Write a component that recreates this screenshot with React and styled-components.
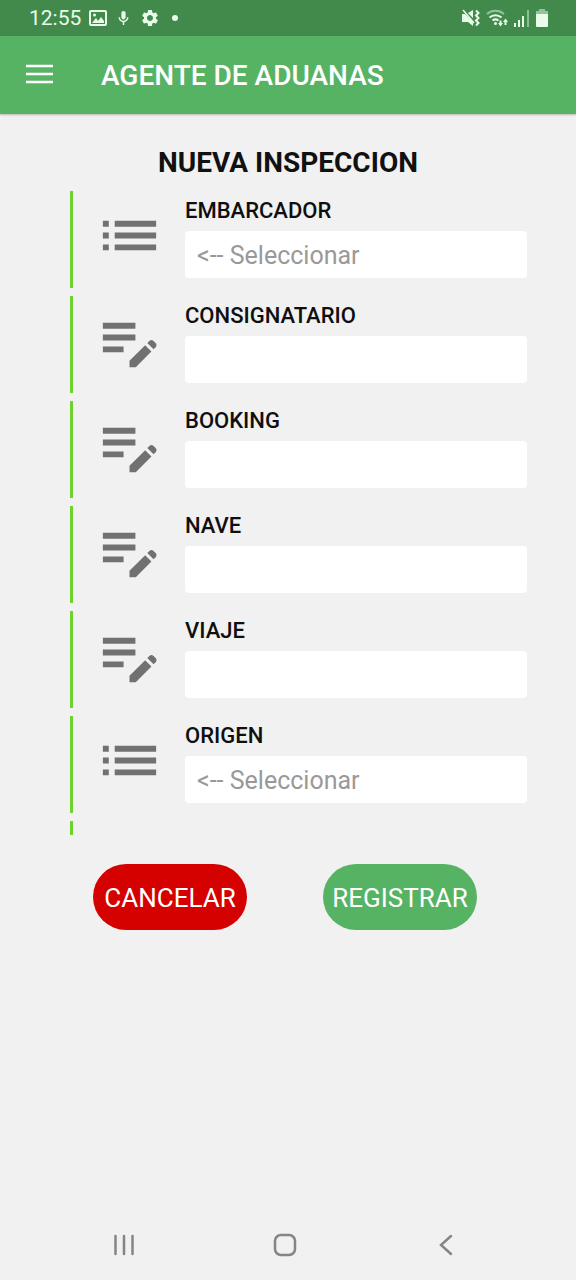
import React, { useState } from "react";
import styled, { createGlobalStyle } from "styled-components";

const GlobalStyle = createGlobalStyle`
  *, *::before, *::after { box-sizing: border-box; }
  body {
    margin: 0;
    background: #f1f1f1;
    color: #0f0f0f;
    font-family: Roboto, "Liberation Sans", sans-serif;
  }
`;

const Screen = styled.div`
  min-height: 100vh;
  display: flex;
  flex-direction: column;
`;

const StatusBar = styled.div`
  height: 36px;
  padding: 0 28px 0 29px;
  display: flex;
  align-items: center;
  justify-content: space-between;
  background: #428a4c;
  color: #e9fbe9;
`;

const StatusGroup = styled.div`
  display: flex;
  align-items: center;
  gap: ${(p) => p.$gap}px;
`;

const Clock = styled.span`
  font-size: 21px;
  line-height: 24px;
`;

const AppBar = styled.header`
  height: 78px;
  padding: 2px 24px 0;
  display: flex;
  align-items: center;
  gap: 47px;
  background: #57b364;
  color: #fff;
  box-shadow: 0 1px 2px rgba(0, 0, 0, 0.25);
`;

const MenuButton = styled.button`
  width: 30px;
  height: 30px;
  padding: 0;
  border: 0;
  background: none;
  color: inherit;
  cursor: pointer;

  svg { display: block; }
`;

const AppTitle = styled.h1`
  margin: 0;
  font-size: 28px;
  line-height: 32px;
  font-weight: 500;
`;

const Form = styled.form`
  padding: 32px 49px 0 70px;
`;

const FormTitle = styled.h2`
  margin: 0 0 11px;
  padding-right: 21px;
  font-size: 28px;
  line-height: 34px;
  font-weight: 700;
  text-align: center;
  color: #111;
`;

const Fields = styled.div`
  display: flex;
  flex-direction: column;
  gap: 8px;
`;

const FieldRow = styled.div`
  height: 97px;
  padding-left: 21px;
  display: flex;
  align-items: flex-start;
  gap: 20px;
  border-left: 3px solid #6cd32f;
`;

const FieldsEnd = styled.div`
  height: 14px;
  border-left: 3px solid #6cd32f;
`;

const FieldIcon = styled.svg`
  flex: none;
  width: 71px;
  height: 71px;
  margin-top: 9px;
  fill: #717171;
`;

const FieldBody = styled.div`
  flex: 1;
  min-width: 0;
  padding-top: 6px;
  display: flex;
  flex-direction: column;
  gap: 6px;
`;

const Label = styled.label`
  font-size: 22px;
  line-height: 28px;
  font-weight: 500;
`;

const Control = styled.input`
  appearance: none;
  width: 100%;
  height: 47px;
  margin: 0;
  padding: 3px 12px 0;
  border: 0;
  border-radius: 4px;
  background: #fff;
  color: #999;
  font-family: inherit;
  font-size: 25px;
  line-height: 30px;
`;

const Actions = styled.div`
  padding: 29px 0 0 23px;
  display: flex;
  gap: 76px;
`;

const PillButton = styled.button`
  width: 154px;
  height: 66px;
  padding: 2px 0 0;
  border: 0;
  border-radius: 33px;
  background: ${(p) => p.$color};
  color: #fff;
  font-family: inherit;
  font-size: 26px;
  line-height: 30px;
  cursor: pointer;
`;

const NavBar = styled.nav`
  height: 70px;
  margin-top: auto;
  padding: 0 49px 0 43px;
  display: grid;
  grid-template-columns: repeat(3, 1fr);
`;

const NavButton = styled.button`
  padding: 0;
  border: 0;
  background: none;
  color: #858585;
  display: flex;
  align-items: center;
  justify-content: center;
  cursor: pointer;
`;

const LIST_PATH =
  "M3 13h2v-2H3v2zm0 4h2v-2H3v2zm0-8h2V7H3v2zm4 4h14v-2H7v2zm0 4h14v-2H7v2zM7 7v2h14V7H7z";
const EDIT_PATH =
  "M3 10h11v2H3v-2zm0-2h11V6H3v2zm0 8h7v-2H3v2zm15.01-3.13.71-.71a.996.996 0 0 1 1.41 0l.71.71c.39.39.39 1.02 0 1.41l-.71.71-2.12-2.12zm-.71.71-5.3 5.3V21h2.12l5.3-5.3-2.12-2.12z";

const FIELDS = [
  { name: "embarcador", label: "EMBARCADOR", type: "select" },
  { name: "consignatario", label: "CONSIGNATARIO", type: "text" },
  { name: "booking", label: "BOOKING", type: "text" },
  { name: "nave", label: "NAVE", type: "text" },
  { name: "viaje", label: "VIAJE", type: "text" },
  { name: "origen", label: "ORIGEN", type: "select" },
];

function Field({ name, label, type, value, onChange }) {
  const isSelect = type === "select";
  return (
    <FieldRow>
      <FieldIcon viewBox="0 0 24 24" aria-hidden="true">
        <path d={isSelect ? LIST_PATH : EDIT_PATH} />
      </FieldIcon>
      <FieldBody>
        <Label htmlFor={name}>{label}</Label>
        {isSelect ? (
          <Control as="select" id={name} name={name} value={value} onChange={onChange}>
            <option value="">{"<-- Seleccionar"}</option>
          </Control>
        ) : (
          <Control id={name} name={name} type="text" value={value} onChange={onChange} />
        )}
      </FieldBody>
    </FieldRow>
  );
}

function StatusIcons() {
  return (
    <StatusGroup $gap={6}>
      <svg width="18" height="18" viewBox="0 0 18 18" fill="currentColor" aria-hidden="true">
        <path d="M0 5h3l8 8v4l-5-4H0zM6 4l5-3v8z" />
        <path d="M1 1l11 13" fill="none" stroke="currentColor" strokeWidth="1.5" />
        <path d="M14 1.500l2.500 2.500-2.500 2.500 2.500 2.500-2.500 2.500 2.500 2.500-2.500 2.500" fill="none" stroke="currentColor" strokeWidth="2" />
      </svg>
      <svg width="22" height="20" viewBox="0 0 22 20" fill="none" stroke="currentColor" strokeWidth="2" aria-hidden="true">
        <path d="M1 6a13 13 0 0 1 17 0" opacity="0.5" />
        <path d="M3.500 9.500a9 9 0 0 1 12 0M6.500 12.500a5 5 0 0 1 6 0" />
        <circle cx="9.500" cy="15.500" r="1.500" fill="currentColor" stroke="none" />
        <path d="M14.500 12.500v4M19.500 17v-4" strokeWidth="2" />
        <path d="M12 15h5l-2.500 3.500zM17 14h5l-2.500-3.500z" fill="currentColor" stroke="none" />
      </svg>
      <svg width="16" height="18" viewBox="0 0 16 18" fill="currentColor" aria-hidden="true">
        <path d="M0 14h2v4H0zM4 11h2v7H4zM8 7h2v11H8z" />
        <path d="M13 1h2v17h-2z" opacity="0.45" />
      </svg>
      <svg width="12" height="18" viewBox="0 0 12 18" fill="currentColor" aria-hidden="true">
        <path d="M3 0h6v2h3v3H0V2h3z" opacity="0.5" />
        <path d="M0 5h12v12a1 1 0 0 1-1 1H1a1 1 0 0 1-1-1z" />
      </svg>
    </StatusGroup>
  );
}

export default function App() {
  const [values, setValues] = useState({});
  const update = (e) => setValues({ ...values, [e.target.name]: e.target.value });

  return (
    <Screen>
      <GlobalStyle />
      <StatusBar>
        <StatusGroup $gap={8}>
          <Clock>12:55</Clock>
          <svg width="18" height="18" viewBox="0 0 18 18" fill="currentColor" aria-hidden="true">
            <path fillRule="evenodd" d="M2 1h14a2 2 0 0 1 2 2v12a2 2 0 0 1-2 2H2a2 2 0 0 1-2-2V3a2 2 0 0 1 2-2zm0 2v12h14V3z" />
            <path d="M3 14l4-5 2 3 3-4 3 4v2z" />
            <circle cx="5.500" cy="6" r="1.500" />
          </svg>
          <svg width="17" height="18" viewBox="0 0 24 24" fill="currentColor" aria-hidden="true">
            <path d="M12 14c1.660 0 3-1.340 3-3V5c0-1.660-1.340-3-3-3S9 3.340 9 5v6c0 1.660 1.340 3 3 3zm5-3c0 2.760-2.240 5-5 5s-5-2.240-5-5H5c0 3.530 2.610 6.430 6 6.920V22h2v-4.080c3.390-.49 6-3.390 6-6.920h-2z" />
          </svg>
          <svg width="20" height="20" viewBox="0 0 24 24" fill="currentColor" aria-hidden="true">
            <path d="M19.140 12.940c.04-.3.060-.61.060-.94 0-.32-.02-.64-.07-.94l2.030-1.580c.18-.14.230-.41.120-.61l-1.920-3.320c-.12-.22-.37-.29-.59-.22l-2.390.96c-.5-.38-1.030-.7-1.620-.94l-.36-2.540c-.04-.24-.24-.41-.48-.41h-3.840c-.24 0-.43.170-.47.410l-.36 2.540c-.59.240-1.130.570-1.620.940l-2.390-.96c-.22-.08-.47 0-.59.220L2.740 8.870c-.12.210-.08.470.120.610l2.030 1.580c-.05.3-.09.630-.09.940s.02.640.070.940l-2.030 1.580c-.18.140-.23.410-.12.610l1.920 3.320c.12.220.370.290.590.220l2.390-.96c.5.380 1.030.7 1.620.940l.36 2.540c.05.240.240.410.480.410h3.840c.24 0 .44-.17.470-.41l.36-2.540c.59-.24 1.130-.56 1.620-.94l2.390.96c.22.080.470 0 .59-.22l1.920-3.320c.12-.22.070-.47-.12-.61l-2.010-1.580zM12 15.600c-1.980 0-3.600-1.620-3.600-3.600s1.620-3.600 3.600-3.600 3.600 1.620 3.600 3.600-1.620 3.600-3.600 3.600z" />
          </svg>
          <svg width="14" height="8" viewBox="0 0 14 8" fill="currentColor" aria-hidden="true">
            <circle cx="7" cy="4" r="3" />
          </svg>
        </StatusGroup>
        <StatusIcons />
      </StatusBar>

      <AppBar>
        <MenuButton type="button" aria-label="Menú">
          <svg width="30" height="30" viewBox="0 0 30 30" stroke="currentColor" strokeWidth="2.5" aria-hidden="true">
            <path d="M2 5h27M2 13h27M2 21h27" />
          </svg>
        </MenuButton>
        <AppTitle>AGENTE DE ADUANAS</AppTitle>
      </AppBar>

      <Form onSubmit={(e) => e.preventDefault()}>
        <FormTitle>NUEVA INSPECCION</FormTitle>
        <Fields>
          {FIELDS.map((f) => (
            <Field key={f.name} {...f} value={values[f.name] || ""} onChange={update} />
          ))}
          <FieldsEnd />
        </Fields>
        <Actions>
          <PillButton type="button" $color="#d50000">CANCELAR</PillButton>
          <PillButton type="submit" $color="#57b364">REGISTRAR</PillButton>
        </Actions>
      </Form>

      <NavBar aria-label="Sistema">
        <NavButton type="button" aria-label="Recientes">
          <svg width="22" height="22" viewBox="0 0 22 22" stroke="currentColor" strokeWidth="2.5" strokeLinecap="round" aria-hidden="true">
            <path d="M2.500 2v18M11 2v18M19.500 2v18" />
          </svg>
        </NavButton>
        <NavButton type="button" aria-label="Inicio">
          <svg width="24" height="24" viewBox="0 0 24 24" fill="none" stroke="currentColor" strokeWidth="2.500" aria-hidden="true">
            <rect x="2" y="2" width="20" height="20" rx="6" />
          </svg>
        </NavButton>
        <NavButton type="button" aria-label="Atrás">
          <svg width="14" height="22" viewBox="0 0 14 22" fill="none" stroke="currentColor" strokeWidth="2.500" strokeLinecap="round" aria-hidden="true">
            <path d="M12 2L2 11l10 9" />
          </svg>
        </NavButton>
      </NavBar>
    </Screen>
  );
}
